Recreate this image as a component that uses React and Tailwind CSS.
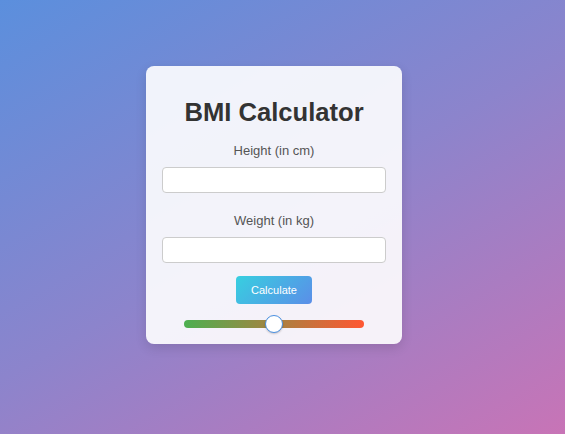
export default function App() {
  return (
    <div className="w-[565px] h-[434px] flex items-center justify-center pr-[17px] pb-[24px] bg-[linear-gradient(150deg,#5b8fdd_0%,#8c84cc_50%,#c874b6_100%)] font-['Liberation_Sans',Arial,sans-serif]">
      <div className="w-[256px] h-[278px] rounded-lg bg-white/90 shadow-[0_4px_12px_rgba(0,0,0,0.12)] px-4 pt-[31px] flex flex-col items-center">
        <h1 className="text-[25.6px] leading-[30px] font-bold text-[#333]">BMI Calculator</h1>
        <label className="mt-[15px] text-[13px] leading-[17px] text-[#555]">Height (in cm)</label>
        <input type="text" className="mt-2 w-full h-[26px] rounded-[4px] border border-[#ccc] bg-white outline-none" />
        <label className="mt-[19px] text-[13px] leading-[17px] text-[#555]">Weight (in kg)</label>
        <input type="text" className="mt-2 w-full h-[26px] rounded-[4px] border border-[#ccc] bg-white outline-none" />
        <button className="mt-[13px] w-[76px] h-[28px] rounded-[4px] bg-[linear-gradient(135deg,#37cfe0,#5b8ee8)] text-white text-[11px]">Calculate</button>
        <div className="mt-[11px] relative w-[180px] h-[18px] flex items-center">
          <div className="w-full h-[8px] rounded-full bg-[linear-gradient(90deg,#4caf50,#ff5733)]" />
          <div className="absolute left-[81px] top-0 w-[18px] h-[18px] rounded-full bg-white border-[1.5px] border-[#4a90e2] shadow-[0_1px_2px_rgba(0,0,0,0.2)]" />
        </div>
      </div>
    </div>
  );
}
